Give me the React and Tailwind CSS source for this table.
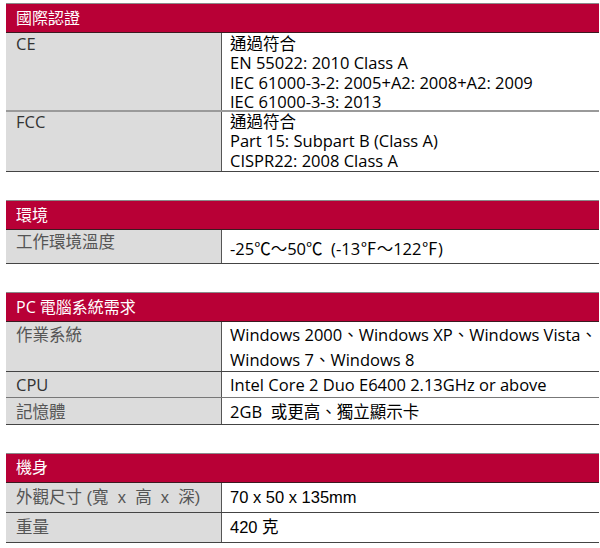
import React from 'react';

const RED = 'bg-[#b80036]';

function Header({ title }) {
  return (
    <div className={`${RED} h-[30px] border-t border-[#8a8a8a] border-b border-b-[#3a1a20] pl-[10px] flex items-center text-white text-[16px]`}>
      {title}
    </div>
  );
}

function Row({ label, children, h, border = 'border-[#444]', labelCls = '', valueCls = '', labelDark }) {
  return (
    <div className={`flex border-b ${border} ${h}`}>
      <div className={`w-[216px] shrink-0 bg-[#dcdcdc] pl-[10px] border-r border-[#555] whitespace-pre ${labelDark ? 'text-[#333]' : 'text-[#555]'} ${labelCls}`}>
        {label}
      </div>
      <div className={`flex-1 pl-[8px] text-black whitespace-pre ${valueCls}`}>{children}</div>
    </div>
  );
}

export default function App() {
  const base = "font-['Open_Sans','Noto_Sans_CJK_TC',sans-serif] text-[16.5px]";
  const arial = "font-['Liberation_Sans',Arial,'Noto_Sans_CJK_TC',sans-serif] text-[16.5px]";
  return (
    <div className="w-[600px] h-[548px] bg-white pl-[6px] pr-[1px] pt-[3px]">
      {/* 國際認證 */}
      <section className={base}>
        <Header title="國際認證" />
        <Row label="CE" labelDark h="h-[79px]" border="border-b-2 border-[#9a9a9a]" labelCls="leading-[19.3px] pt-[1px]" valueCls="leading-[19.3px] pt-[1px]">
          <div>通過符合</div>
          <div>EN 55022: 2010 Class A</div>
          <div>IEC 61000-3-2: 2005+A2: 2008+A2: 2009</div>
          <div>IEC 61000-3-3: 2013</div>
        </Row>
        <Row label="FCC" labelDark h="h-[60px]" labelCls="leading-[19.3px]" valueCls="leading-[19.3px]">
          <div>通過符合</div>
          <div>Part 15: Subpart B (Class A)</div>
          <div>CISPR22: 2008 Class A</div>
        </Row>
      </section>

      {/* 環境 */}
      <section className={`${base} mt-[28px]`}>
        <Header title="環境" />
        <Row label="工作環境溫度" h="h-[34px]" labelCls="pt-[1px] leading-[22px]" valueCls="pt-[8px] leading-[22px]">
          -25℃～50℃  (-13℉～122℉)
        </Row>
      </section>

      {/* PC 電腦系統需求 */}
      <section className={`${base} mt-[28px]`}>
        <Header title="PC 電腦系統需求" />
        <Row label="作業系統" h="h-[50px]" labelCls="pt-[1px] leading-[24px]" valueCls="leading-[25px]">
          <div>Windows 2000、Windows XP、Windows Vista、</div>
          <div>Windows 7、Windows 8</div>
        </Row>
        <Row label="CPU" labelDark h="h-[26px]" border="border-[#777]" labelCls="leading-[26px]" valueCls="leading-[26px]">
          Intel Core 2 Duo E6400 2.13GHz or above
        </Row>
        <Row label="記憶體" h="h-[27px]" labelCls="leading-[27px]" valueCls="leading-[27px]">
          2GB  或更高、獨立顯示卡
        </Row>
      </section>

      {/* 機身 */}
      <section className={`${arial} mt-[28px]`}>
        <Header title="機身" />
        <Row label="外觀尺寸 (寬  x  高  x  深)" h="h-[30px]" labelCls="leading-[29px]" valueCls="leading-[29px]">
          70 x 50 x 135mm
        </Row>
        <Row label="重量" h="h-[30px]" labelCls="leading-[29px]" valueCls="leading-[29px]">
          420 克
        </Row>
      </section>
    </div>
  );
}
